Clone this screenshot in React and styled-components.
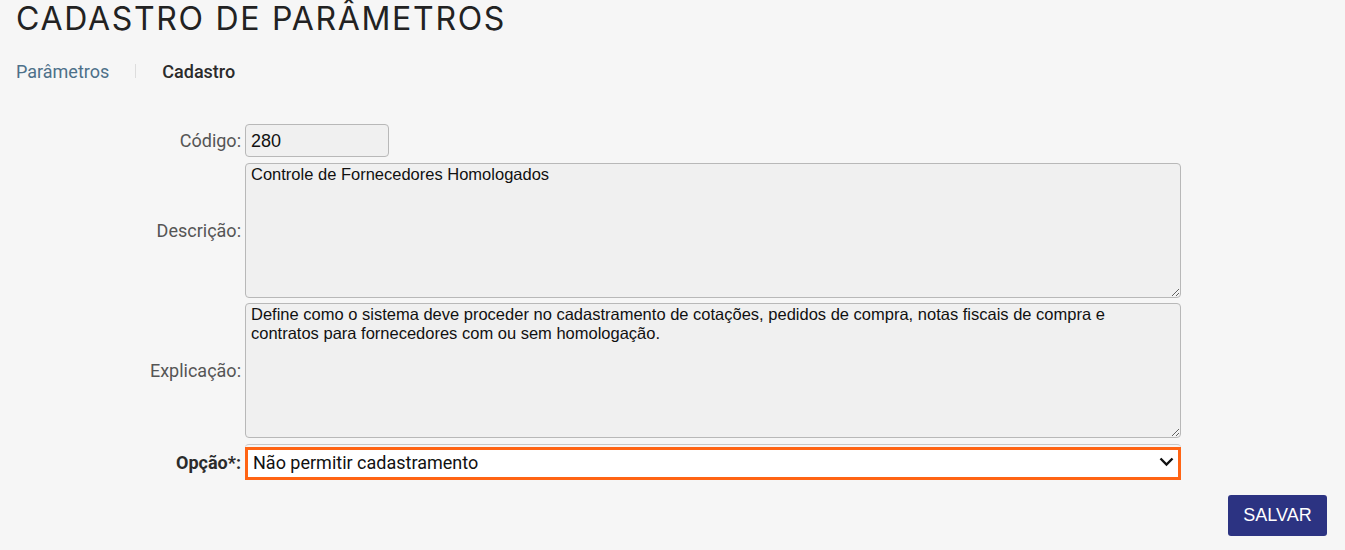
import React from "react";
import styled, { createGlobalStyle } from "styled-components";

const Global = createGlobalStyle`
  html, body {
    margin: 0;
    padding: 0;
    background: #f6f6f6;
  }
  body {
    font-family: Roboto, "Liberation Sans", sans-serif;
    color: #333;
  }
`;

const Page = styled.div`
  padding: 0 16px;
  min-height: 550px;
  box-sizing: border-box;
`;

const Title = styled.h1`
  margin: 0;
  font-family: Inter, "Liberation Sans", sans-serif;
  font-weight: 400;
  font-size: 32px;
  line-height: 38px;
  color: #222;
  letter-spacing: 1.7px;
`;

const Crumbs = styled.nav`
  display: flex;
  align-items: center;
  margin-top: 21px;
  font-size: 18px;
  height: 24px;
`;

const Crumb = styled.span`
  color: ${(p) => (p.active ? "#2b2b2b" : "#4d7089")};
  font-weight: ${(p) => (p.active ? 500 : 400)};
`;

const Sep = styled.span`
  width: 1px;
  height: 14px;
  background: #ddd;
  margin: 0 26px 0 26px;
`;

const Form = styled.form`
  display: grid;
  grid-template-columns: 225px 936px;
  column-gap: 4px;
  margin-top: 41px;
  align-items: center;
`;

const Label = styled.label`
  text-align: right;
  font-size: 18px;
  color: ${(p) => (p.strong ? "#2b2b2b" : "#555")};
  font-weight: ${(p) => (p.strong ? 700 : 400)};
  margin-top: ${(p) => p.mt || 0}px;
`;

const Field = styled.div`
  margin-top: ${(p) => p.mt || 0}px;
`;

const Input = styled.input`
  box-sizing: border-box;
  width: 144px;
  height: 33px;
  padding: 1px 5px 0;
  border: 1px solid #b8b8b8;
  border-radius: 4px;
  background: #f0f0f0;
  font-family: "Liberation Sans", Arial, sans-serif;
  font-size: 18px;
  color: #111;
`;

const Area = styled.textarea`
  display: block;
  box-sizing: border-box;
  width: 936px;
  height: 135px;
  padding: 1px 5px;
  border: 1px solid #b8b8b8;
  border-radius: 4px;
  background: #f0f0f0;
  font-family: "Liberation Sans", Arial, sans-serif;
  font-size: 16.5px;
  line-height: 19px;
  color: #111;
  resize: vertical;
`;

const SelectWrap = styled.div`
  position: relative;
  border-top: 1px solid #c8c8c8;
  border-radius: 4px 4px 0 0;
  padding-top: 2px;
`;

const Select = styled.select`
  box-sizing: border-box;
  width: 936px;
  height: 33px;
  padding: 0 30px 2px 5px;
  border: 3px solid #ff6414;
  background: #fff;
  font-family: Roboto, "Liberation Sans", sans-serif;
  font-size: 18px;
  color: #111;
  appearance: none;
  outline: none;
`;

const Chevron = styled.svg`
  position: absolute;
  right: 7px;
  top: 12px;
  pointer-events: none;
`;

const Actions = styled.div`
  display: flex;
  justify-content: flex-end;
  padding-right: 2px;
  margin-top: 15px;
`;

const Button = styled.button`
  width: 99px;
  height: 41px;
  border: none;
  border-radius: 3px;
  background: #2c3382;
  color: #fff;
  font-family: "Liberation Sans", Arial, sans-serif;
  font-size: 18px;
  cursor: pointer;
`;

export default function App() {
  return (
    <Page>
      <Global />
      <Title>CADASTRO DE PARÂMETROS</Title>
      <Crumbs>
        <Crumb>Parâmetros</Crumb>
        <Sep />
        <Crumb active>Cadastro</Crumb>
      </Crumbs>
      <Form>
        <Label>Código:</Label>
        <Field>
          <Input defaultValue="280" readOnly />
        </Field>

        <Label mt={6}>Descrição:</Label>
        <Field mt={6}>
          <Area defaultValue="Controle de Fornecedores Homologados" readOnly />
        </Field>

        <Label mt={5}>Explicação:</Label>
        <Field mt={5}>
          <Area
            defaultValue="Define como o sistema deve proceder no cadastramento de cotações, pedidos de compra, notas fiscais de compra e contratos para fornecedores com ou sem homologação."
            readOnly
          />
        </Field>

        <Label strong mt={6}>Opção*:</Label>
        <Field mt={6}>
          <SelectWrap>
            <Select defaultValue="nao">
              <option value="nao">Não permitir cadastramento</option>
              <option value="sim">Permitir cadastramento</option>
            </Select>
            <Chevron width="15" height="10" viewBox="0 0 15 10">
              <path d="M1.5 1.5 L7.5 7.5 L13.5 1.5" fill="none" stroke="#111" strokeWidth="2.4" />
            </Chevron>
          </SelectWrap>
        </Field>
      </Form>
      <Actions>
        <Button type="button">SALVAR</Button>
      </Actions>
    </Page>
  );
}
